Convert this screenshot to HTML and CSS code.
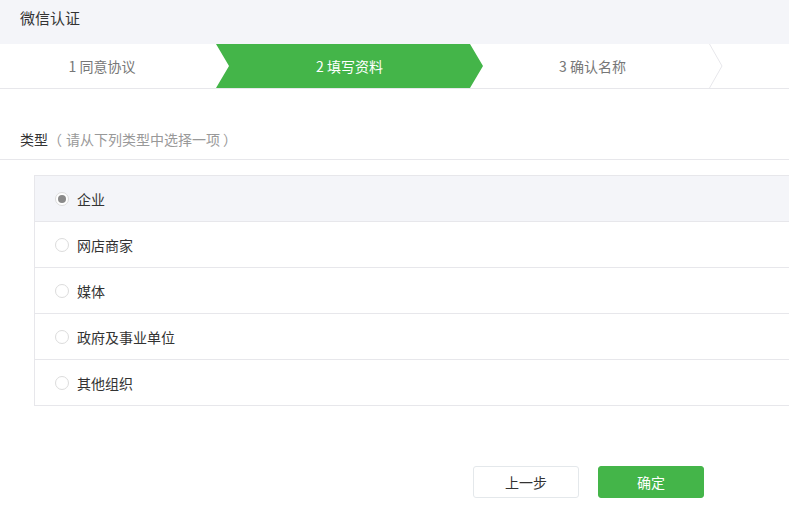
FILE: index.html
```html
<!DOCTYPE html>
<html lang="zh">
<head>
<meta charset="utf-8">
<title>微信认证</title>
<link rel="stylesheet" href="styles.css">
</head>
<body>
<div class="page">
  <div class="header">微信认证</div>
  <div class="steps">
    <div class="step step-first"><span>1 同意协议</span></div>
    <div class="step step-active"><span>2 填写资料</span></div>
    <div class="step step-last">
      <span>3 确认名称</span>
      <svg class="chev" width="14" height="44" viewBox="0 0 14 44"><polyline points="0.5,0 13,22 0.5,44" fill="none" stroke="#e7e7eb" stroke-width="1"/></svg>
    </div>
  </div>
  <div class="section-title"><span class="strong">类型</span><span class="hint">（<span class="inner">请从下列类型中选择一项</span>）</span></div>
  <div class="options">
    <label class="option selected"><span class="radio"><span class="dot"></span></span><span class="label">企业</span></label>
    <label class="option"><span class="radio"></span><span class="label">网店商家</span></label>
    <label class="option"><span class="radio"></span><span class="label">媒体</span></label>
    <label class="option"><span class="radio"></span><span class="label">政府及事业单位</span></label>
    <label class="option"><span class="radio"></span><span class="label">其他组织</span></label>
  </div>
  <div class="actions">
    <button class="btn btn-default">上一步</button>
    <button class="btn btn-primary">确定</button>
  </div>
</div>
</body>
</html>
```
FILE: styles.css
```css
* { box-sizing: border-box; }
html, body { margin: 0; padding: 0; background: #fff; }
body {
  font-family: "Noto Sans CJK SC", "Microsoft YaHei", sans-serif;
  font-size: 14px;
  color: #333;
  width: 789px;
  overflow: hidden;
}
.page { width: 789px; }
.header {
  height: 44px;
  background: #f4f5f9;
  padding-left: 20px;
  font-size: 15px;
  line-height: 36px;
  color: #333;
}
.steps {
  display: flex;
  height: 45px;
  border-bottom: 1px solid #e7e7eb;
  overflow: hidden;
}
.step {
  height: 44px;
  display: flex;
  align-items: center;
  justify-content: center;
  font-size: 14px;
  color: #777;
  position: relative;
}
.step-first { width: 216px; padding-right: 12px; }
.step-active {
  width: 267px;
  background: #44b549;
  color: #fff;
  clip-path: polygon(0 0, 254px 0, 267px 22px, 254px 44px, 0 44px, 13px 22px);
  padding-left: 13px;
  padding-right: 13px;
}
.step-last { width: 240px; margin-left: -13px; padding-left: 13px; padding-right: 8px; }
.chev { position: absolute; right: -13px; top: 0; }
.section-title {
  margin-top: 38px;
  height: 33px;
  padding-left: 20px;
  border-bottom: 1px solid #e7e7eb;
  font-size: 14px;
  line-height: 24px;
}
.section-title .strong { color: #333; }
.section-title .hint { color: #999; }
.section-title .inner { padding: 0 3px 0 4px; }
.options {
  margin-top: 15px;
  margin-left: 34px;
  border: 1px solid #e7e7eb;
  border-right: none;
}
.option {
  display: flex;
  align-items: center;
  height: 46px;
  padding-left: 20px;
  border-top: 1px solid #e7e7eb;
}
.option:first-child { border-top: none; height: 45px; }
.option.selected { background: #f4f5f9; }
.radio {
  width: 14px;
  height: 14px;
  border: 1px solid #dcdcdc;
  border-radius: 50%;
  background: #fff;
  display: flex;
  align-items: center;
  justify-content: center;
  margin-right: 8px;
}
.dot { width: 8px; height: 8px; border-radius: 50%; background: #8a8a8a; }
.label { color: #333; font-size: 14px; }
.actions {
  display: flex;
  gap: 19px;
  margin-top: 60px;
  padding-left: 473px;
}
.btn {
  width: 106px;
  height: 32px;
  border-radius: 3px;
  font-family: inherit;
  font-size: 14px;
  cursor: pointer;
}
.btn-default { background: #fff; border: 1px solid #e4e8eb; color: #333; }
.btn-primary { background: #44b549; border: 1px solid #44b549; color: #fff; }
```
